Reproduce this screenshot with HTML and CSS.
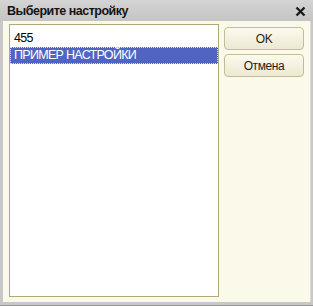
FILE: index.html
```html
<!DOCTYPE html>
<html lang="ru">
    <head>
        <meta charset="UTF-8" />
        <title>Выберите настройку</title>
        <link rel="stylesheet" href="styles.css">
    </head>
    <body>
        <!-- Dialog window -->
        <div class="window">
            <div class="titlebar">
                <span class="title">Выберите настройку</span>
                <span class="close">
                    <svg width="11" height="11" viewBox="0 0 11 11">
                        <path d="M1.5 1.5 L9.5 9.5 M9.5 1.5 L1.5 9.5" stroke="#1a1a1a" stroke-width="2.3" />
                    </svg>
                </span>
            </div>
            <div class="body">
                <!-- Settings list -->
                <div class="list">
                    <div class="item">455</div>
                    <div class="item selected">ПРИМЕР НАСТРОЙКИ</div>
                </div>
                <!-- Buttons -->
                <div class="buttons">
                    <button class="btn">OK</button>
                    <button class="btn">Отмена</button>
                </div>
            </div>
        </div>
    </body>
</html>
```
FILE: styles.css
```css
/* Page reset */
body {
    margin: 0;
    font-family: "Liberation Sans", Arial, sans-serif;
}

/* Window frame */
.window {
    width: 313px;
    height: 306px;
    box-sizing: border-box;
    background-color: rgb(200, 200, 200);
    padding: 0 2px 3px 3px;
    border-bottom: 1px solid rgb(150, 150, 150);
    display: flex;
    flex-direction: column;
}

/* Title bar */
.titlebar {
    height: 21px;
    display: flex;
    align-items: center;
    justify-content: space-between;
    padding: 0 7px 0 7px;
    background: linear-gradient(rgb(212, 212, 212), rgb(196, 196, 196));
    margin: 0 -2px 0 -3px;
}

.title {
    font-size: 12.5px;
    font-weight: bold;
    letter-spacing: -0.5px;
    color: rgb(20, 20, 20);
}

.close {
    display: flex;
    margin-top: 2px;
}

/* Content area */
.body {
    flex: 1;
    display: flex;
    background-color: rgb(251, 249, 234);
    border-right: 1px solid rgb(222, 220, 205);
    padding: 3px 6px 5px 6px;
    gap: 5px;
}

.list {
    width: 208px;
    background-color: white;
    border: 1px solid rgb(176, 168, 120);
    padding: 5px 0 0 0;
}

.item {
    height: 17px;
    line-height: 17px;
    font-size: 12.5px;
    letter-spacing: -0.7px;
    padding-left: 4px;
    color: black;
    box-sizing: border-box;
}

.selected {
    background-color: rgb(80, 100, 192);
    color: white;
    border: 1px dotted rgb(220, 225, 255);
    line-height: 15px;
    padding-left: 3px;
}

.buttons {
    display: flex;
    flex-direction: column;
    gap: 4px;
    padding-top: 3px;
}

.btn {
    width: 80px;
    height: 23px;
    font-family: "Liberation Sans", Arial, sans-serif;
    font-size: 12px;
    letter-spacing: -0.4px;
    color: rgb(40, 30, 20);
    background: linear-gradient(rgb(252, 250, 238), rgb(236, 232, 210));
    border: 1px solid rgb(196, 188, 150);
    border-radius: 4px;
    padding: 0;
}
```
